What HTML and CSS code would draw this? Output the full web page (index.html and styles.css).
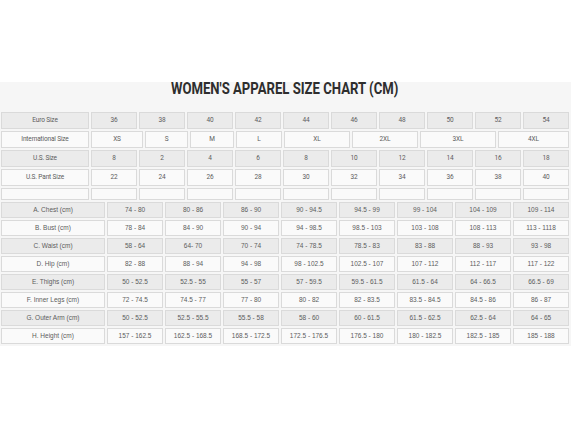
FILE: index.html
```html
<!DOCTYPE html>
<html lang="en">
<head>
<meta charset="utf-8">
<title>Women's Apparel Size Chart (CM)</title>
<link rel="stylesheet" href="styles.css">
</head>
<body>
<div class="band">
  <h1 class="title"><span class="title-text">WOMEN'S APPAREL SIZE CHART (CM)</span></h1>

  <div class="sizes">
    <div class="row cols-ten shade">
      <div class="cell">Euro Size</div>
      <div class="cell">36</div><div class="cell">38</div><div class="cell">40</div><div class="cell">42</div><div class="cell">44</div>
      <div class="cell">46</div><div class="cell">48</div><div class="cell">50</div><div class="cell">52</div><div class="cell">54</div>
    </div>
    <div class="row cols-intl light">
      <div class="cell">International Size</div>
      <div class="cell">XS</div><div class="cell">S</div><div class="cell">M</div><div class="cell">L</div>
      <div class="cell">XL</div><div class="cell">2XL</div><div class="cell">3XL</div><div class="cell">4XL</div>
    </div>
    <div class="row cols-ten shade">
      <div class="cell">U.S. Size</div>
      <div class="cell">8</div><div class="cell">2</div><div class="cell">4</div><div class="cell">6</div><div class="cell">8</div>
      <div class="cell">10</div><div class="cell">12</div><div class="cell">14</div><div class="cell">16</div><div class="cell">18</div>
    </div>
    <div class="row cols-ten light">
      <div class="cell">U.S. Pant Size</div>
      <div class="cell">22</div><div class="cell">24</div><div class="cell">26</div><div class="cell">28</div><div class="cell">30</div>
      <div class="cell">32</div><div class="cell">34</div><div class="cell">36</div><div class="cell">38</div><div class="cell">40</div>
    </div>
    <div class="row cols-ten light spacer">
      <div class="cell"></div>
      <div class="cell"></div><div class="cell"></div><div class="cell"></div><div class="cell"></div><div class="cell"></div>
      <div class="cell"></div><div class="cell"></div><div class="cell"></div><div class="cell"></div><div class="cell"></div>
    </div>
  </div>

  <div class="measures">
    <div class="row cols-eight shade">
      <div class="cell">A. Chest (cm)</div>
      <div class="cell">74 - 80</div><div class="cell">80 - 86</div><div class="cell">86 - 90</div><div class="cell">90 - 94.5</div>
      <div class="cell">94.5 - 99</div><div class="cell">99 - 104</div><div class="cell">104 - 109</div><div class="cell">109 - 114</div>
    </div>
    <div class="row cols-eight light">
      <div class="cell">B. Bust (cm)</div>
      <div class="cell">78 - 84</div><div class="cell">84 - 90</div><div class="cell">90 - 94</div><div class="cell">94 - 98.5</div>
      <div class="cell">98.5 - 103</div><div class="cell">103 - 108</div><div class="cell">108 - 113</div><div class="cell">113 - 1118</div>
    </div>
    <div class="row cols-eight shade">
      <div class="cell">C. Waist (cm)</div>
      <div class="cell">58 - 64</div><div class="cell">64- 70</div><div class="cell">70 - 74</div><div class="cell">74 - 78.5</div>
      <div class="cell">78.5 - 83</div><div class="cell">83 - 88</div><div class="cell">88 - 93</div><div class="cell">93 - 98</div>
    </div>
    <div class="row cols-eight light">
      <div class="cell">D. Hip (cm)</div>
      <div class="cell">82 - 88</div><div class="cell">88 - 94</div><div class="cell">94 - 98</div><div class="cell">98 - 102.5</div>
      <div class="cell">102.5 - 107</div><div class="cell">107 - 112</div><div class="cell">112 - 117</div><div class="cell">117 - 122</div>
    </div>
    <div class="row cols-eight shade">
      <div class="cell">E. Thighs (cm)</div>
      <div class="cell">50 - 52.5</div><div class="cell">52.5 - 55</div><div class="cell">55 - 57</div><div class="cell">57 - 59.5</div>
      <div class="cell">59.5 - 61.5</div><div class="cell">61.5 - 64</div><div class="cell">64 - 66.5</div><div class="cell">66.5 - 69</div>
    </div>
    <div class="row cols-eight light">
      <div class="cell">F. Inner Legs (cm)</div>
      <div class="cell">72 - 74.5</div><div class="cell">74.5 - 77</div><div class="cell">77 - 80</div><div class="cell">80 - 82</div>
      <div class="cell">82 - 83.5</div><div class="cell">83.5 - 84.5</div><div class="cell">84.5 - 86</div><div class="cell">86 - 87</div>
    </div>
    <div class="row cols-eight shade">
      <div class="cell">G. Outer Arm (cm)</div>
      <div class="cell">50 - 52.5</div><div class="cell">52.5 - 55.5</div><div class="cell">55.5 - 58</div><div class="cell">58 - 60</div>
      <div class="cell">60 - 61.5</div><div class="cell">61.5 - 62.5</div><div class="cell">62.5 - 64</div><div class="cell">64 - 65</div>
    </div>
    <div class="row cols-eight light">
      <div class="cell">H. Height (cm)</div>
      <div class="cell">157 - 162.5</div><div class="cell">162.5 - 168.5</div><div class="cell">168.5 - 172.5</div><div class="cell">172.5 - 176.5</div>
      <div class="cell">176.5 - 180</div><div class="cell">180 - 182.5</div><div class="cell">182.5 - 185</div><div class="cell">185 - 188</div>
    </div>
  </div>
</div>
</body>
</html>
```

FILE: styles.css
```css
html, body {
  margin: 0;
  padding: 0;
  background: #ffffff;
}

body {
  font-family: "Liberation Sans", Arial, sans-serif;
  color: #5c5c5c;
}

.band {
  margin-top: 82px;
  background: #f6f6f6;
  padding: 0 2px 2px 1px;
}

.title {
  margin: 0 0 16px 0;
  text-align: center;
  font-family: Roboto, "Liberation Sans", sans-serif;
  font-weight: 700;
  font-size: 16px;
  line-height: 14px;
  color: #2e2e2e;
}

.title-text {
  display: inline-block;
  transform: scaleX(0.82);
  transform-origin: center;
}

.sizes,
.measures {
  display: flex;
  flex-direction: column;
  gap: 2px;
}

.measures {
  margin-top: 2px;
}

.row {
  display: grid;
  column-gap: 2px;
}

.sizes .row {
  height: 17px;
}

.sizes .row.spacer {
  height: 12px;
}

.measures .row {
  height: 16px;
}

.cols-ten {
  grid-template-columns: 88px repeat(10, 1fr);
}

.cols-intl {
  grid-template-columns: 88px 52px 43px 44px 46px 66px 66px 76px 71px;
}

.cols-eight {
  grid-template-columns: 104px repeat(8, 1fr);
}

.cell {
  box-sizing: border-box;
  border: 1px solid #dadada;
  display: flex;
  align-items: center;
  justify-content: center;
  font-size: 6.5px;
  line-height: 1;
  color: #5c5c5c;
  white-space: nowrap;
  overflow: hidden;
}

.sizes .cell {
  font-family: Roboto, "Liberation Sans", sans-serif;
  letter-spacing: -0.15px;
}

.shade .cell {
  background: #ebebeb;
}

.light .cell {
  background: #fafafa;
}
```
